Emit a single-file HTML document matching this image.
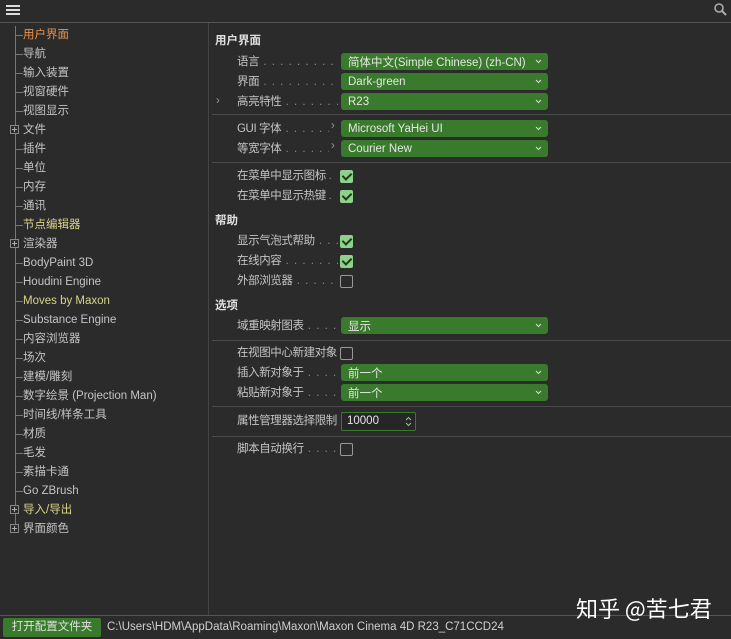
<!DOCTYPE html>
<html><head><meta charset="utf-8"><style>
*{margin:0;padding:0;box-sizing:border-box}
body{width:731px;height:639px;background:#2b2b2b;font-family:"Liberation Sans","Noto Sans CJK SC",sans-serif;font-size:11.5px;color:#c4c4c4;position:relative;overflow:hidden}
.a{position:absolute;white-space:nowrap}
.hl{position:absolute;height:1px;background:#4a4a4a}
.t{position:absolute;left:23px;line-height:19px;margin-top:1px}
.tl{position:absolute;left:15px;width:8px;height:1px;background:#777}
.plus{position:absolute;left:10px;width:9px;height:9px;border:1px solid #888;background:#2b2b2b}
.plus:before{content:"";position:absolute;left:1px;top:3px;width:5px;height:1px;background:#aaa}
.plus:after{content:"";position:absolute;left:3px;top:1px;width:1px;height:5px;background:#aaa}
.lab{position:absolute;left:237px;line-height:18px;color:#c4c4c4;white-space:nowrap;overflow:hidden;width:101px;letter-spacing:-0.4px}
.dots{color:#888;letter-spacing:1px}
.dd{position:absolute;left:341px;width:207px;height:17px;background:#3a7a2c;border-radius:3px;color:#e6e6e6;padding-left:7px;display:flex;align-items:center;white-space:nowrap}
.dd svg{position:absolute;right:6px;top:6px}
.cb{position:absolute;left:340px;width:13px;height:13px;border:1px solid #999;border-radius:2px}
.cb.on{background:#8fd08a;border-color:#8fd08a}
.cb.on:after{content:"";position:absolute;left:3px;top:0px;width:4px;height:7px;border:solid #1e3d1a;border-width:0 2px 2px 0;transform:rotate(45deg)}
.h{position:absolute;left:215px;font-weight:bold;color:#e0e0e0;line-height:18px}
</style></head><body>
<div class="a" style="left:6px;top:5px;width:14px;height:2px;background:#ddd;box-shadow:0 4px 0 #ddd,0 8px 0 #ddd"></div>
<svg class="a" style="left:713px;top:2px" width="15" height="15"><circle cx="6" cy="6" r="4" stroke="#aaa" stroke-width="1.6" fill="none"/><line x1="9" y1="9" x2="13" y2="13" stroke="#aaa" stroke-width="2"/></svg>
<div class="hl" style="left:0;top:22px;width:731px;background:#555"></div>
<div class="a" style="left:208px;top:23px;width:1px;height:592px;background:#444"></div>
<div class="a" style="left:15px;top:26px;width:1px;height:503px;background:#777"></div>
<div class="hl" style="left:0;top:615px;width:731px;background:#555"></div>

<div class="tl" style="top:35px"></div><div class="t" style="top:25px;color:#f0904a">用户界面</div>
<div class="tl" style="top:54px"></div><div class="t" style="top:44px">导航</div>
<div class="tl" style="top:73px"></div><div class="t" style="top:63px">输入装置</div>
<div class="tl" style="top:92px"></div><div class="t" style="top:82px">视窗硬件</div>
<div class="tl" style="top:111px"></div><div class="t" style="top:101px">视图显示</div>
<div class="plus" style="top:125px"></div><div class="t" style="top:120px">文件</div>
<div class="tl" style="top:149px"></div><div class="t" style="top:139px">插件</div>
<div class="tl" style="top:168px"></div><div class="t" style="top:158px">单位</div>
<div class="tl" style="top:187px"></div><div class="t" style="top:177px">内存</div>
<div class="tl" style="top:206px"></div><div class="t" style="top:196px">通讯</div>
<div class="tl" style="top:225px"></div><div class="t" style="top:215px;color:#d8d48a">节点编辑器</div>
<div class="plus" style="top:239px"></div><div class="t" style="top:234px">渲染器</div>
<div class="tl" style="top:263px"></div><div class="t" style="top:253px">BodyPaint 3D</div>
<div class="tl" style="top:282px"></div><div class="t" style="top:272px">Houdini Engine</div>
<div class="tl" style="top:301px"></div><div class="t" style="top:291px;color:#d8d48a">Moves by Maxon</div>
<div class="tl" style="top:320px"></div><div class="t" style="top:310px">Substance Engine</div>
<div class="tl" style="top:339px"></div><div class="t" style="top:329px">内容浏览器</div>
<div class="tl" style="top:358px"></div><div class="t" style="top:348px">场次</div>
<div class="tl" style="top:377px"></div><div class="t" style="top:367px">建模/雕刻</div>
<div class="tl" style="top:396px"></div><div class="t" style="top:386px">数字绘景 (Projection Man)</div>
<div class="tl" style="top:415px"></div><div class="t" style="top:405px">时间线/样条工具</div>
<div class="tl" style="top:434px"></div><div class="t" style="top:424px">材质</div>
<div class="tl" style="top:453px"></div><div class="t" style="top:443px">毛发</div>
<div class="tl" style="top:472px"></div><div class="t" style="top:462px">素描卡通</div>
<div class="tl" style="top:491px"></div><div class="t" style="top:481px">Go ZBrush</div>
<div class="plus" style="top:505px"></div><div class="t" style="top:500px;color:#d8d48a">导入/导出</div>
<div class="plus" style="top:524px"></div><div class="t" style="top:519px">界面颜色</div>

<div class="h" style="top:32px">用户界面</div>
<div class="lab" style="top:53px">语言<span class="dots"> . . . . . . . . . . . .</span></div><div class="dd" style="top:53px">简体中文(Simple Chinese) (zh-CN)<svg width="7" height="5"><path d="M1 1l2.5 2.5L6 1" stroke="#ddd" fill="none"/></svg></div>
<div class="lab" style="top:73px">界面<span class="dots"> . . . . . . . . . . . .</span></div><div class="dd" style="top:73px">Dark-green<svg width="7" height="5"><path d="M1 1l2.5 2.5L6 1" stroke="#ddd" fill="none"/></svg></div>
<div class="a" style="left:216px;top:95px;color:#999">›</div>
<div class="lab" style="top:93px">高亮特性<span class="dots"> . . . . . . . . .</span></div><div class="dd" style="top:93px">R23<svg width="7" height="5"><path d="M1 1l2.5 2.5L6 1" stroke="#ddd" fill="none"/></svg></div>
<div class="hl" style="left:212px;top:114px;width:519px"></div>
<div class="lab" style="top:120px;width:92px">GUI 字体<span class="dots"> . . . . . . .</span></div><div class="a" style="left:331px;top:120px;color:#999">›</div><div class="dd" style="top:120px">Microsoft YaHei UI<svg width="7" height="5"><path d="M1 1l2.5 2.5L6 1" stroke="#ddd" fill="none"/></svg></div>
<div class="lab" style="top:140px;width:92px">等宽字体<span class="dots"> . . . . . . .</span></div><div class="a" style="left:331px;top:140px;color:#999">›</div><div class="dd" style="top:140px">Courier New<svg width="7" height="5"><path d="M1 1l2.5 2.5L6 1" stroke="#ddd" fill="none"/></svg></div>
<div class="hl" style="left:212px;top:162px;width:519px"></div>
<div class="lab" style="top:167px">在菜单中显示图标 <span class="dots">. .</span></div><div class="cb on" style="top:170px"></div>
<div class="lab" style="top:187px">在菜单中显示热键 <span class="dots">. .</span></div><div class="cb on" style="top:190px"></div>
<div class="h" style="top:212px">帮助</div>
<div class="lab" style="top:232px">显示气泡式帮助<span class="dots"> . . . .</span></div><div class="cb on" style="top:235px"></div>
<div class="lab" style="top:252px">在线内容<span class="dots"> . . . . . . . . . .</span></div><div class="cb on" style="top:255px"></div>
<div class="lab" style="top:272px">外部浏览器<span class="dots"> . . . . . . . .</span></div><div class="cb" style="top:275px"></div>
<div class="h" style="top:297px">选项</div>
<div class="lab" style="top:317px">域重映射图表<span class="dots"> . . . . . . .</span></div><div class="dd" style="top:317px">显示<svg width="7" height="5"><path d="M1 1l2.5 2.5L6 1" stroke="#ddd" fill="none"/></svg></div>
<div class="hl" style="left:212px;top:340px;width:519px"></div>
<div class="lab" style="top:344px">在视图中心新建对象</div><div class="cb" style="top:347px"></div>
<div class="lab" style="top:364px">插入新对象于<span class="dots"> . . . . . . .</span></div><div class="dd" style="top:364px">前一个<svg width="7" height="5"><path d="M1 1l2.5 2.5L6 1" stroke="#ddd" fill="none"/></svg></div>
<div class="lab" style="top:384px">粘贴新对象于<span class="dots"> . . . . . . .</span></div><div class="dd" style="top:384px">前一个<svg width="7" height="5"><path d="M1 1l2.5 2.5L6 1" stroke="#ddd" fill="none"/></svg></div>
<div class="hl" style="left:212px;top:406px;width:519px"></div>
<div class="lab" style="top:412px">属性管理器选择限制</div>
<div class="a" style="left:341px;top:412px;width:75px;height:19px;border:1px solid #3a7a2c;border-radius:2px;background:#262626;color:#e6e6e6;padding-left:5px;line-height:17px">10000<svg style="position:absolute;right:3px;top:3px" width="7" height="11"><path d="M1 4l2.5-2.5L6 4M1 7l2.5 2.5L6 7" stroke="#8c8" fill="none"/></svg></div>
<div class="hl" style="left:212px;top:436px;width:519px"></div>
<div class="lab" style="top:440px">脚本自动换行<span class="dots"> . . . . . . .</span></div><div class="cb" style="top:443px"></div>

<div class="a" style="left:576px;top:592px;font-size:22px;color:#fff;font-family:'Noto Sans CJK SC',sans-serif">知乎 @苦七君</div>

<div class="a" style="left:3px;top:618px;width:98px;height:19px;background:#3a7a2c;border-radius:2px;color:#e0e0e0;text-align:center;line-height:19px">打开配置文件夹</div>
<div class="a" style="left:107px;top:618px;line-height:19px;color:#d0d0d0">C:\Users\HDM\AppData\Roaming\Maxon\Maxon Cinema 4D R23_C71CCD24</div>
</body></html>
